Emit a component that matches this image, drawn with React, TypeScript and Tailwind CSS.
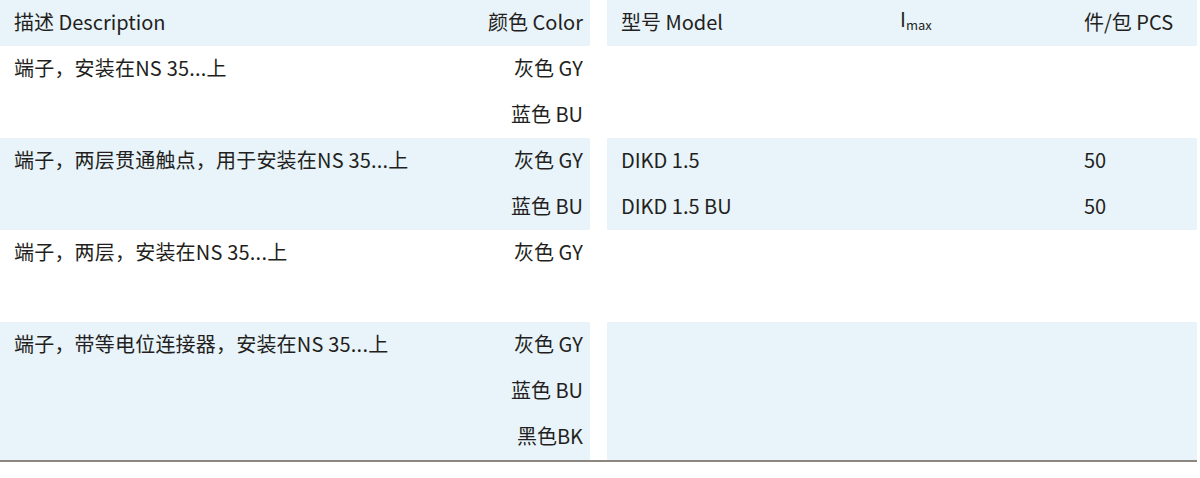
const rows = [
  { desc: "端子，安装在NS 35...上", colors: ["灰色 GY", "蓝色 BU"], lines: 2, blue: false, models: [] as { model: string; pcs: string }[] },
  {
    desc: "端子，两层贯通触点，用于安装在NS 35...上",
    colors: ["灰色 GY", "蓝色 BU"],
    lines: 2,
    blue: true,
    models: [
      { model: "DIKD 1.5", pcs: "50" },
      { model: "DIKD 1.5 BU", pcs: "50" },
    ],
  },
  { desc: "端子，两层，安装在NS 35...上", colors: ["灰色 GY"], lines: 2, blue: false, models: [] },
  { desc: "端子，带等电位连接器，安装在NS 35...上", colors: ["灰色 GY", "蓝色 BU", "黑色BK"], lines: 3, blue: true, models: [] },
];

export default function App() {
  return (
    <div className="w-[1200px] h-[478px] bg-white text-[#231f20] text-[20px] leading-[24px] font-['Noto_Sans_CJK_SC','Noto_Sans',sans-serif]">
      <div className="w-[1197px] border-b-2 border-[#8c8680]">
        <div className="flex gap-[17px]">
          {/* left: description + colour */}
          <div className="w-[590px] flex flex-col">
            <div className="h-[46px] bg-[#e8f3fa] flex items-center justify-between pl-[14px] pr-[7px] pb-[2px]">
              <span>描述 Description</span>
              <span>颜色 Color</span>
            </div>
            {rows.map((r, i) => (
              <div key={i} className={`flex pl-[14px] pr-[7px] ${r.blue ? "bg-[#e8f3fa]" : "bg-white"}`}>
                <div className="flex-1">
                  <div className="h-[46px] flex items-center pb-[2px] tracking-[0.2px]">{r.desc}</div>
                </div>
                <div className="flex flex-col items-end">
                  {Array.from({ length: r.lines }).map((_, j) => (
                    <div key={j} className="h-[46px] flex items-center pb-[2px]">
                      {r.colors[j] ?? ""}
                    </div>
                  ))}
                </div>
              </div>
            ))}
          </div>

          {/* right: model / imax / pcs */}
          <div className="w-[590px] flex flex-col">
            <div className="h-[46px] bg-[#e8f3fa] flex items-center pl-[14px] pb-[2px]">
              <span className="w-[279px]">型号 Model</span>
              <span className="w-[184px]">
                I<span className="text-[13px] align-[-3px]">max</span>
              </span>
              <span>件/包 PCS</span>
            </div>
            {rows.map((r, i) => (
              <div key={i} className={`flex flex-col ${r.blue ? "bg-[#e8f3fa]" : "bg-white"}`}>
                {Array.from({ length: r.lines }).map((_, j) => (
                  <div key={j} className="h-[46px] flex items-center pl-[14px] pb-[2px]">
                    <span className="w-[279px]">{r.models[j]?.model ?? ""}</span>
                    <span className="w-[184px]"></span>
                    <span>{r.models[j]?.pcs ?? ""}</span>
                  </div>
                ))}
              </div>
            ))}
          </div>
        </div>
      </div>
    </div>
  );
}
